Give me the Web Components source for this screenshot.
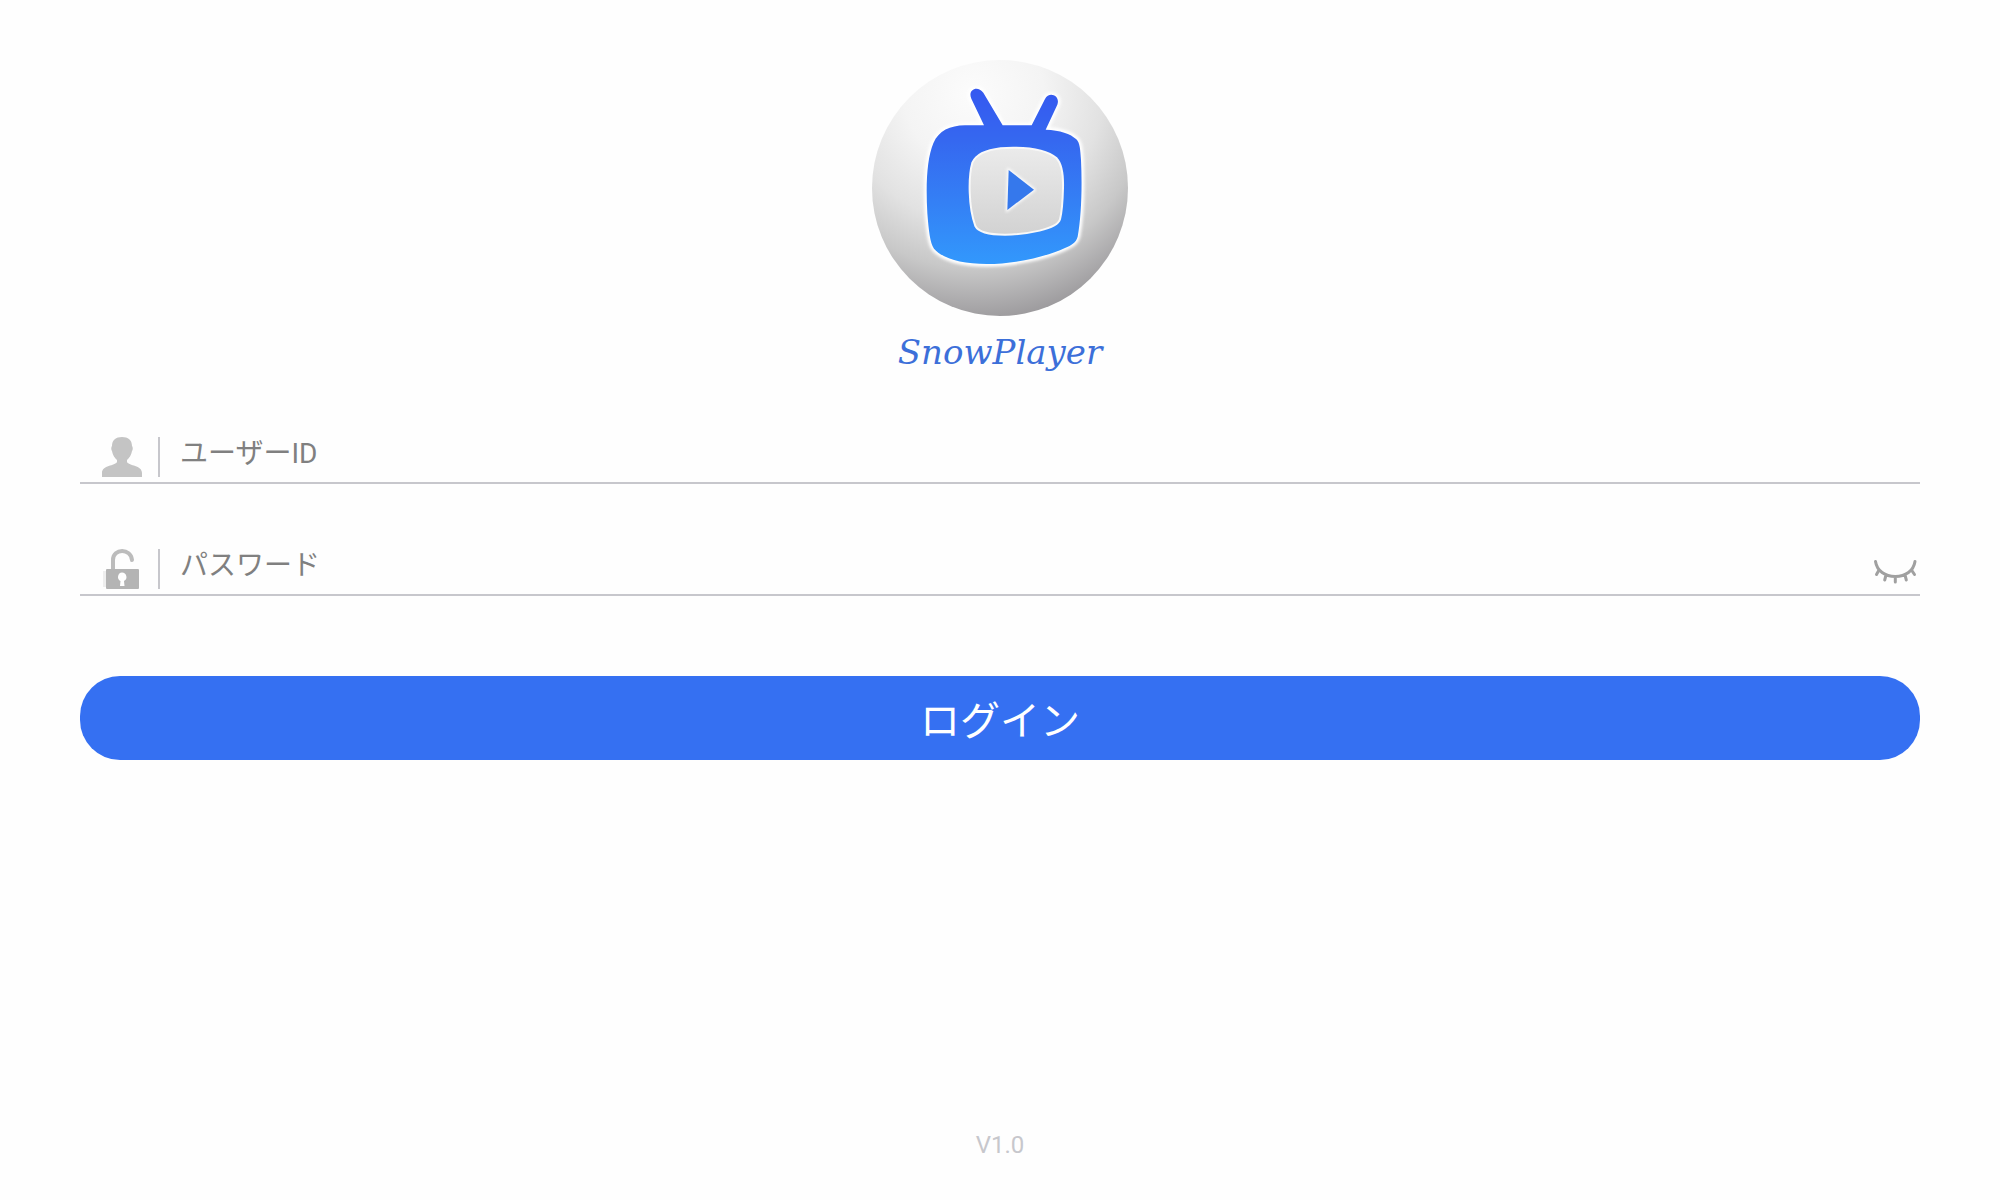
<!DOCTYPE html>
<html lang="ja">
<head>
    <meta charset="UTF-8">
    <meta name="viewport" content="width=device-width, initial-scale=1.0">
    <title>SnowPlayer</title>
    <style>
        body{
            margin: 0;
            background-color: #fefefe;
            font-family: Roboto, "Noto Sans CJK JP", sans-serif;
        }
    </style>
</head>
<body>

    <login-page>
        <snow-logo slot="logo">SnowPlayer</snow-logo>
        <login-field name="user" type="text" label="ユーザーID">
            <svg slot="icon" width="40" height="40" viewBox="0 0 40 40" aria-hidden="true">
                <path fill="#c4c4c4" d="M20 0C26 0 30 3 30 9C31 10 31 13 30 14C29 19 27 21 25 23V25C27 29 40 28 40 36V40H0V36C0 28 13 29 15 25V23C13 21 11 19 10 14C9 13 9 10 10 9C10 3 14 0 20 0Z"/>
            </svg>
        </login-field>
        <login-field name="password" type="password" label="パスワード">
            <svg slot="icon" width="40" height="40" viewBox="0 0 40 40" aria-hidden="true">
                <path fill="none" stroke="#bcbcbc" stroke-width="4" stroke-linecap="round" d="M11 21V11C11 -1 29 -1 30 11"/>
                <path fill="#eee" d="M1 22H5V38H1Z"/>
                <rect x="4" y="20" width="33" height="20" rx="1" fill="#b4b4b4"/>
                <path fill="#fff" d="M20 23.500A4.500 4.500 0 0 1 22 32L22.500 37H18L18.500 32A4.500 4.500 0 0 1 20 23.500Z"/>
            </svg>
        </login-field>
        <login-button>ログイン</login-button>
        <span slot="version">V1.0</span>
    </login-page>

    <script>
        class LoginPage extends HTMLElement
        {
            constructor()
            {
                super();
                this.shadow = this.attachShadow({mode:'open'})
            }

            connectedCallback()
            {
                this.shadow.innerHTML = `
                    <style>
                        :host{
                            display: flex;
                            flex-direction: column;
                            box-sizing: border-box;
                            min-height: 100vh;
                            padding: 60px 80px 40px;
                        }
                        form{
                            display: flex;
                            flex-direction: column;
                            gap: 65px;
                            margin-top: 61px;
                        }
                        footer{
                            margin-top: auto;
                            text-align: center;
                            font-size: 24px;
                            line-height: 30px;
                            color: #c7c7cc;
                        }
                    </style>
                    <slot name="logo"></slot>
                    <form><slot></slot></form>
                    <footer><slot name="version"></slot></footer>
                `
            }
        }

        class SnowLogo extends HTMLElement
        {
            constructor()
            {
                super();
                this.shadow = this.attachShadow({mode:'open'})
            }

            connectedCallback()
            {
                this.shadow.innerHTML = `
                    <style>
                        :host{
                            display: flex;
                            flex-direction: column;
                            align-items: center;
                            gap: 12px;
                        }
                        h1{
                            margin: 0;
                            font: italic 400 34px/48px "Lucida Calligraphy", "DejaVu Serif", serif;
                            color: #3c6fd9;
                        }
                    </style>
                    <svg width="256" height="256" viewBox="36 30 768 768" aria-hidden="true">
                        <defs>
                            <radialGradient id="ball" gradientUnits="userSpaceOnUse" cx="340" cy="130" r="700">
                                <stop offset="0" stop-color="#fcfcfc"/>
                                <stop offset=".3" stop-color="#f4f4f4"/>
                                <stop offset=".55" stop-color="#e2e2e2"/>
                                <stop offset=".75" stop-color="#c8c8c8"/>
                                <stop offset="1" stop-color="#979598"/>
                            </radialGradient>
                            <linearGradient id="tv" gradientUnits="userSpaceOnUse" x1="0" y1="115" x2="0" y2="642">
                                <stop offset="0" stop-color="#3558f0"/>
                                <stop offset=".3" stop-color="#3568f0"/>
                                <stop offset=".65" stop-color="#3480f5"/>
                                <stop offset="1" stop-color="#3298fc"/>
                            </linearGradient>
                            <linearGradient id="screen" x1="0" y1="0" x2="0" y2="1">
                                <stop offset="0" stop-color="#ebebeb"/>
                                <stop offset="1" stop-color="#d2d2d2"/>
                            </linearGradient>
                            <filter id="soft"><feGaussianBlur stdDeviation="4"/></filter>
                            <path id="set" d="M372 226L334 146C322 120 352 104 370 128L428 226H515L555 147C568 122 602 138 592 164L557 239C600 241 632 251 649 268C660 279 661 300 663 330C667 410 664 500 653 560C648 578 635 585 615 594C555 622 460 642 380 642C305 642 248 626 222 596C210 580 206 540 202 490C197 400 201 325 220 280C236 242 270 227 315 226Z"/>
                        </defs>
                        <circle cx="420" cy="414" r="384" fill="url(#ball)"/>
                        <use href="#set" filter="url(#soft)" fill="#fff" stroke="#fff" stroke-width="16"/>
                        <use href="#set" fill="url(#tv)"/>
                        <path fill="url(#screen)" stroke="#f8f8f8" stroke-width="6" d="M348 322C370 300 415 293 460 293C515 293 565 303 590 325C606 342 610 380 609 415C608 455 606 485 600 508C592 538 500 553 435 554C390 554 356 548 346 528C325 470 325 380 337 338C340 331 343 327 348 322Z"/>
                        <path filter="url(#soft)" fill="#fff" stroke="#fff" stroke-width="8" d="M446 360L522 419L442 480Z"/>
                        <path fill="#3578ec" d="M446 360L522 419L442 480Z"/>
                    </svg>
                    <h1><slot></slot></h1>
                `
            }
        }

        class LoginField extends HTMLElement
        {
            constructor()
            {
                super();
                this.shadow = this.attachShadow({mode:'open'})
            }

            connectedCallback()
            {
                const label = this.getAttribute('label')
                const type = this.getAttribute('type')
                this.shadow.innerHTML = `
                    <style>
                        :host{
                            display: flex;
                            align-items: flex-start;
                            padding: 0 0 5px 22px;
                            border-bottom: 2px solid #c7c7cc;
                        }
                        label{
                            display: flex;
                            padding-right: 16px;
                            border-right: 2px solid #c7c7cc;
                        }
                        input{
                            flex: 1;
                            min-width: 0;
                            height: 32px;
                            margin: 0;
                            padding: 0 0 0 20px;
                            border: 0;
                            outline: 0;
                            background: none;
                            font: inherit;
                            font-size: 28px;
                            color: #333;
                        }
                        input::placeholder{
                            color: #808080;
                        }
                        button{
                            display: flex;
                            padding: 0;
                            border: 0;
                            background: none;
                            cursor: pointer;
                        }
                    </style>
                    <label for="box"><slot name="icon"></slot></label>
                    <input id="box" type="${type}" placeholder="${label}" aria-label="${label}">
                    ${type === 'password' ? this.#createEye() : ''}
                `
                const eye = this.shadow.querySelector('button')
                if (eye) {
                    const box = this.shadow.querySelector('input')
                    eye.addEventListener('click', () => {
                        box.type = box.type === 'password' ? 'text' : 'password'
                    })
                }
            }

            #createEye()
            {
                return `
                    <button type="button" aria-label="パスワードを表示">
                        <svg width="50" height="40" viewBox="0 0 50 40" fill="none" stroke="#a0a0a0" stroke-width="3" stroke-linecap="round">
                            <path d="M5.500 12.500C7 22 15 27.500 25.300 27.500S43.500 22 45 12.500M9 21L6.500 25.500M16 26L14.700 31M25.300 28V33M35 26L36.300 31M41.500 21L44.500 25.500"/>
                        </svg>
                    </button>
                `
            }
        }

        class LoginButton extends HTMLElement
        {
            constructor()
            {
                super();
                this.shadow = this.attachShadow({mode:'open'})
            }

            connectedCallback()
            {
                this.shadow.innerHTML = `
                    <style>
                        :host{
                            display: block;
                            margin-top: 15px;
                        }
                        button{
                            display: block;
                            width: 100%;
                            height: 84px;
                            padding: 0;
                            border: 0;
                            border-radius: 40px;
                            background-color: #3570f2;
                            color: white;
                            font: inherit;
                            font-size: 40px;
                            cursor: pointer;
                        }
                    </style>
                    <button type="button"><slot></slot></button>
                `
            }
        }

        customElements.define('login-page',LoginPage);
        customElements.define('snow-logo',SnowLogo);
        customElements.define('login-field',LoginField);
        customElements.define('login-button',LoginButton);
    </script>
</body>
</html>
